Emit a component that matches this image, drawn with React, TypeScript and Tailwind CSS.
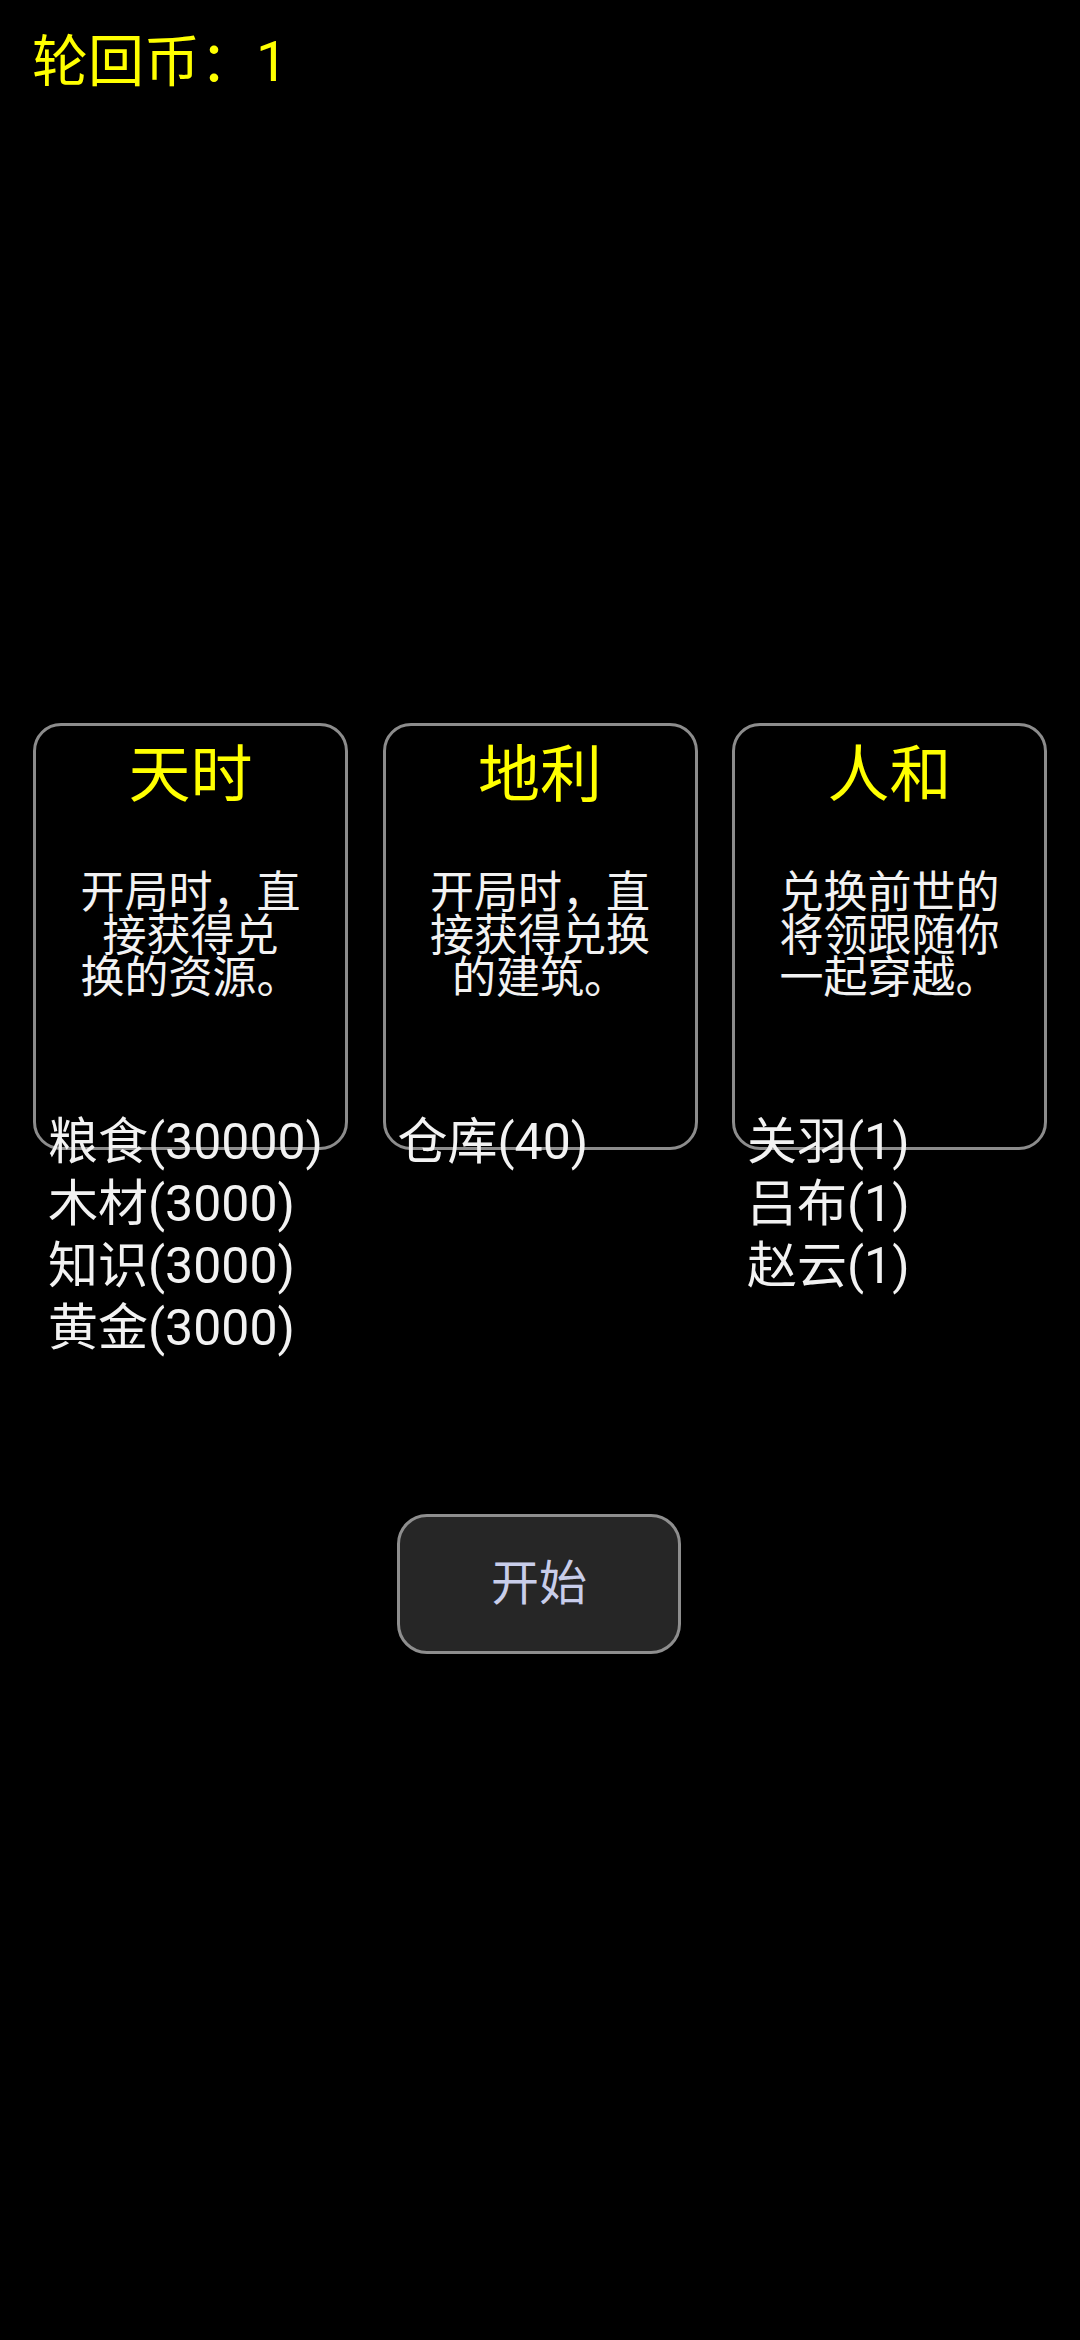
const font = { fontFamily: 'Roboto, "Noto Sans CJK SC", sans-serif' };

type Card = {
  title: string;
  lines: string[];
  items: string[];
};

const cards: Card[] = [
  {
    title: '天时',
    lines: ['开局时，直', '接获得兑', '换的资源。'],
    items: ['粮食(30000)', '木材(3000)', '知识(3000)', '黄金(3000)'],
  },
  {
    title: '地利',
    lines: ['开局时，直', '接获得兑换', '的建筑。'],
    items: ['仓库(40)'],
  },
  {
    title: '人和',
    lines: ['兑换前世的', '将领跟随你', '一起穿越。'],
    items: ['关羽(1)', '吕布(1)', '赵云(1)'],
  },
];

const App = () => {
  return (
    <div className="w-[1080px] h-[2340px] bg-black overflow-hidden" style={font}>
      <div className="px-[32px] pt-[30px] text-[56px] leading-[64px] text-[#ffff00]">轮回币：1</div>

      <div className="mt-[629px] px-[33px] flex justify-between">
        {cards.map((c) => (
          <div key={c.title} className="w-[315px] flex flex-col">
            <div className="h-[427px] border-[3px] border-[#8c8c8c] rounded-[28px] flex flex-col items-center">
              <p className="mt-[18px] text-[62px] leading-[64px] text-[#ffff00]">{c.title}</p>
              <p className="mt-[64px] text-[44px] leading-[42.5px] text-[#f2f2f2] text-center">
                {c.lines[0]}
                <br />
                {c.lines[1]}
                <br />
                {c.lines[2]}
              </p>
            </div>
            <div className="mt-[-39px] pl-[15px] flex flex-col text-[50px] leading-[62px] text-[#f2f2f2]">
              {c.items.map((i) => (
                <span key={i}>{i}</span>
              ))}
            </div>
          </div>
        ))}
      </div>

      <div className="mt-[155px] flex justify-center">
        <button className="w-[284px] h-[140px] ml-[-2px] rounded-[30px] border-[3px] border-[#8e8e8e] bg-[#262626] text-[48px] text-[#c8cdea]">
          开始
        </button>
      </div>
    </div>
  );
};

export default App;
